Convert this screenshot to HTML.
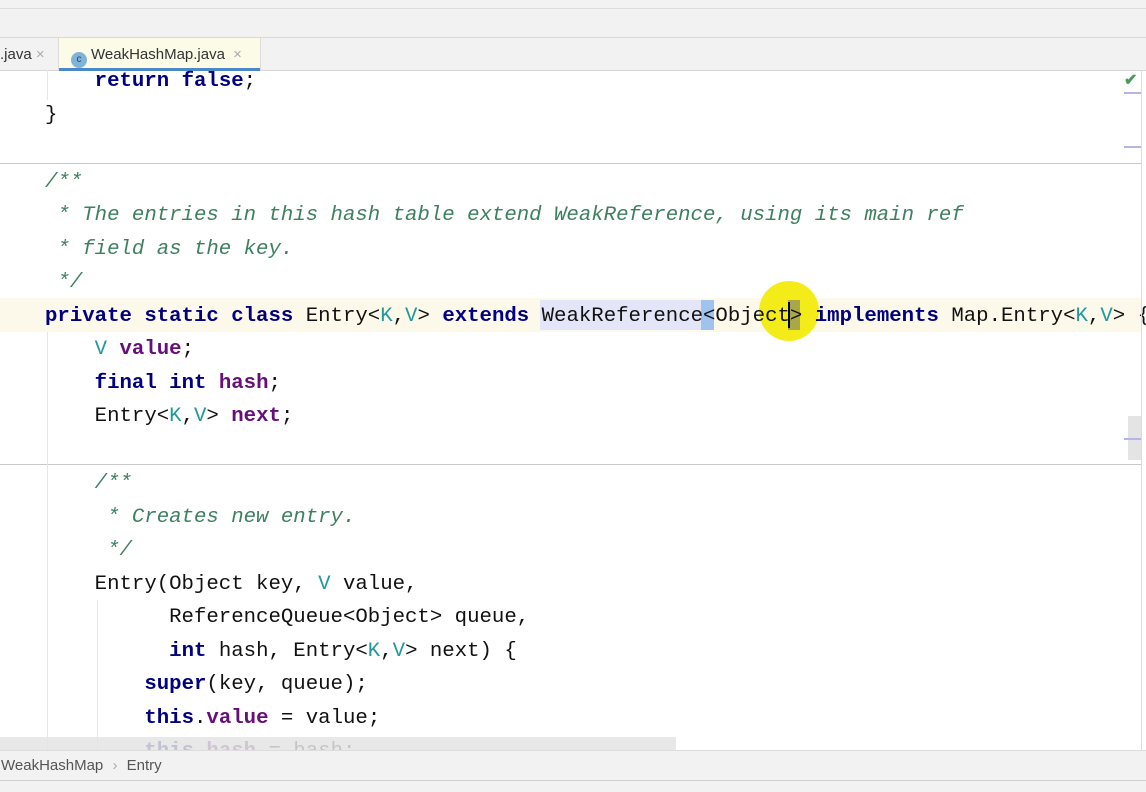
<!DOCTYPE html>
<html><head><meta charset="utf-8"><style>
*{margin:0;padding:0;box-sizing:border-box}
body{width:1146px;height:792px;overflow:hidden;background:#fff;position:relative;font-family:"Liberation Sans",sans-serif}
.top{position:absolute;left:0;top:0;width:1146px;height:38px;background:#f2f2f2;border-bottom:1px solid #d8d8d8}
.tabs{position:absolute;left:0;top:38px;width:1146px;height:33px;background:#f2f2f2;border-bottom:1px solid #d6d6d6}
.tab{position:absolute;top:0;height:33px;font-size:15px;color:#333;line-height:33px}
.code{position:absolute;left:45px;top:65px;font-family:"Liberation Mono",monospace;font-size:20.7px;line-height:33.5px;color:#111;white-space:pre}
.k{color:#000080;font-weight:bold}
.c{color:#3d8060;font-style:italic}
.t{color:#20999d}
.f{color:#660e7a;font-weight:bold}
.sep{position:absolute;left:0;width:1141px;height:1px;background:#c8c8c8}
.guide{position:absolute;width:1px;background:#e6e6e6}
</style></head><body>
<div class="top"><div style="position:absolute;left:0;top:8px;width:1146px;height:1px;background:#ddd"></div></div>
<div class="tabs">
 <div class="tab" style="left:0;width:58px;padding-left:0">.java <span style="color:#aaa">×</span></div>
 <div class="tab" style="left:58px;width:203px;background:#fbfbe8;border-left:1px solid #ddd;border-right:1px solid #ddd;padding-left:12px">
  <span style="display:inline-block;width:16px;height:16px;border-radius:8px;background:#7fb3d9;vertical-align:-3px;margin-right:4px;font-size:10px;line-height:16px;text-align:center;color:#345">c</span>WeakHashMap.java <span style="color:#aaa;margin-left:4px">×</span>
  <div style="position:absolute;left:0;right:0;bottom:0;height:3px;background:#4a88c7"></div>
 </div>
</div>
<div style="position:absolute;left:0;top:298px;width:1141px;height:34px;background:#fcf9ea"></div>
<div style="position:absolute;left:540px;top:300px;width:174px;height:30px;background:#e3e6f8"></div>
<div style="position:absolute;left:701px;top:300px;width:13px;height:30px;background:#9fc3ec"></div>
<div style="position:absolute;left:759px;top:281px;width:60px;height:60px;border-radius:30px;background:#f3ec18"></div>
<div style="position:absolute;left:788px;top:300px;width:12px;height:30px;background:#a8a848"></div>
<div style="position:absolute;left:788px;top:302px;width:2px;height:26px;background:#000"></div>
<div class="sep" style="top:163px"></div>
<div class="sep" style="top:464px"></div>
<div class="guide" style="left:47px;top:70px;height:30px"></div>
<div class="guide" style="left:47px;top:332px;height:420px"></div>
<div class="guide" style="left:97px;top:600px;height:150px"></div>
<div class="code">    <span class="k">return false</span>;
}

<span class="c">/**</span>
<span class="c"> * The entries in this hash table extend WeakReference, using its main ref</span>
<span class="c"> * field as the key.</span>
<span class="c"> */</span>
<span class="k">private static class</span> Entry&lt;<span class="t">K</span>,<span class="t">V</span>&gt; <span class="k">extends</span> WeakReference&lt;Object&gt; <span class="k">implements</span> Map.Entry&lt;<span class="t">K</span>,<span class="t">V</span>&gt; {
    <span class="t">V</span> <span class="f">value</span>;
    <span class="k">final int</span> <span class="f">hash</span>;
    Entry&lt;<span class="t">K</span>,<span class="t">V</span>&gt; <span class="f">next</span>;

    <span class="c">/**</span>
<span class="c">     * Creates new entry.</span>
<span class="c">     */</span>
    Entry(Object key, <span class="t">V</span> value,
          ReferenceQueue&lt;Object&gt; queue,
          <span class="k">int</span> hash, Entry&lt;<span class="t">K</span>,<span class="t">V</span>&gt; next) {
        <span class="k">super</span>(key, queue);
        <span class="k">this</span>.<span class="f">value</span> = value;
        <span class="k">this</span>.<span class="f">hash</span> = hash;</div>
<div style="position:absolute;left:0;top:737px;width:676px;height:13px;background:rgba(228,228,228,0.85)"></div>
<div style="position:absolute;left:0;top:750px;width:1146px;height:30px;background:#f2f2f2;border-top:1px solid #ddd;font-size:15px;color:#555;line-height:30px;padding-left:1px">WeakHashMap <span style="color:#aaa;margin:0 5px">›</span> Entry</div>
<div style="position:absolute;left:0;top:780px;width:1146px;height:12px;background:#f2f2f2;border-top:1px solid #d0d0d0"></div>
<div style="position:absolute;left:1141px;top:70px;width:1px;height:680px;background:#ddd"></div>
<div style="position:absolute;left:1124px;top:70px;font-size:16px;color:#4a9a5a;font-weight:bold">✔</div>
<div style="position:absolute;left:1124px;top:92px;width:17px;height:2px;background:#b4b4e6"></div>
<div style="position:absolute;left:1124px;top:146px;width:17px;height:2px;background:#b4b4e6"></div>
<div style="position:absolute;left:1128px;top:416px;width:13px;height:44px;background:#e4e4e4"></div>
<div style="position:absolute;left:1124px;top:438px;width:17px;height:2px;background:#b4b4e6"></div>
</body></html>
